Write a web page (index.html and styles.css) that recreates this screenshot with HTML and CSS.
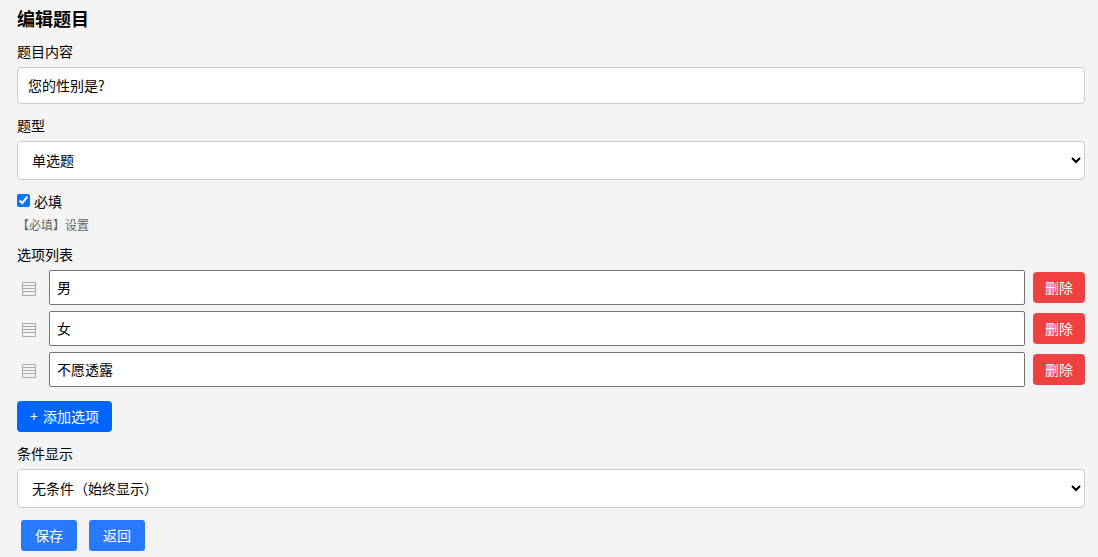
FILE: index.html
```html
<!DOCTYPE html>
<html lang="zh-CN">
  <head>
    <meta charset="utf-8" />
    <title>编辑题目</title>
    <link rel="stylesheet" href="styles.css">
  </head>
  <body>
    <h1>编辑题目</h1>
    <form id="question-form">
      <div class="field">
        <label for="content">题目内容</label>
        <input class="control" type="text" id="content" value="您的性别是?" />
      </div>
      <div class="field">
        <label for="type">题型</label>
        <select class="control" id="type">
          <option>单选题</option>
          <option>多选题</option>
        </select>
      </div>
      <div class="required">
        <input type="checkbox" id="required" checked />
        <label for="required">必填</label>
      </div>
      <div class="hint">【必填】设置</div>

      <label class="options-label">选项列表</label>
      <div class="options">
        <div class="option">
          <svg class="handle" viewBox="0 0 14 14"><path d="M.5 .5h13v13H.5zM1 3.5h12M1 6.5h12M1 9.5h12" /></svg>
          <input type="text" value="男" />
          <button class="delete" type="button">删除</button>
        </div>
        <div class="option">
          <svg class="handle" viewBox="0 0 14 14"><path d="M.5 .5h13v13H.5zM1 3.5h12M1 6.5h12M1 9.5h12" /></svg>
          <input type="text" value="女" />
          <button class="delete" type="button">删除</button>
        </div>
        <div class="option">
          <svg class="handle" viewBox="0 0 14 14"><path d="M.5 .5h13v13H.5zM1 3.5h12M1 6.5h12M1 9.5h12" /></svg>
          <input type="text" value="不愿透露" />
          <button class="delete" type="button">删除</button>
        </div>
      </div>
      <button class="add" type="button">+ 添加选项</button>

      <div class="field">
        <label for="condition">条件显示</label>
        <select class="control" id="condition">
          <option>无条件（始终显示）</option>
        </select>
      </div>
      <div class="buttons">
        <button type="button">保存</button>
        <button type="button">返回</button>
      </div>
    </form>
  </body>
</html>
```

FILE: styles.css
```css
* {
  box-sizing: border-box;
}

html {
  overflow: hidden;
}

body {
  margin: 0;
  padding: 6px 13px 0 17px;
  background: #f4f4f4;
  color: #000;
}

body,
input,
select,
button {
  font-family: "Noto Sans CJK SC", sans-serif;
  font-size: 14px;
}

h1 {
  margin: 0 0 11px;
  font-size: 18px;
  font-weight: bold;
  line-height: 24px;
}

label {
  display: block;
  line-height: 20px;
}

.field {
  display: flex;
  flex-direction: column;
  gap: 6px;
  margin-bottom: 11px;
}

.control {
  width: 100%;
  height: 37px;
  padding: 0 10px 2px;
  border: 1px solid #ccc;
  border-radius: 4px;
  background: #fff;
  color: #000;
}

select.control {
  height: 39px;
}

.required {
  display: flex;
  align-items: center;
  gap: 4px;
}

.required input {
  width: 13px;
  height: 13px;
  margin: 0 0 1px;
}

.hint {
  margin: 4px 0 9px;
  color: #666;
  font-size: 12px;
  line-height: 20px;
}

.options {
  display: flex;
  flex-direction: column;
  gap: 6px;
  margin: 6px 0 14px;
}

.option {
  display: flex;
  align-items: center;
}

.option input {
  flex: 1;
  height: 35px;
  padding: 0 7px 2px;
  border: 1px solid #767676;
  border-radius: 2px;
}

.handle {
  width: 14px;
  height: 14px;
  margin: 3px 13px 0 5px;
  fill: none;
  stroke: #aaa;
}

button {
  height: 31px;
  padding: 0 0 2px;
  border: 0;
  border-radius: 4px;
  color: #fff;
}

.delete {
  width: 52px;
  margin-left: 8px;
  background: #ef4141;
}

.add {
  display: block;
  width: 95px;
  margin-bottom: 11px;
  background: #06f;
  word-spacing: 2px;
}

.buttons {
  display: flex;
  gap: 12px;
  margin-top: 12px;
  padding-left: 4px;
}

.buttons button {
  width: 56px;
  border-radius: 3px;
  background: #2979ff;
}
```
